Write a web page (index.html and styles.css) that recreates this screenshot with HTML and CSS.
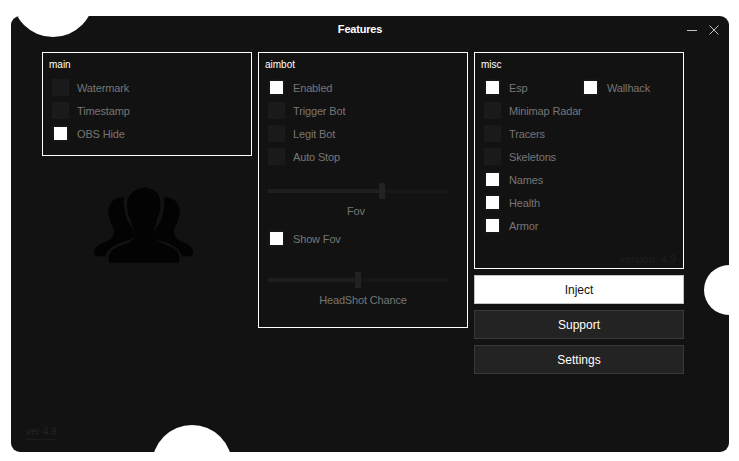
FILE: index.html
```html
<!DOCTYPE html>
<html lang="en">
  <head>
    <meta charset="utf-8">
    <title>Features</title>
    <link rel="stylesheet" href="styles.css">
  </head>
  <body>
    <div id="window">
      <div class="blob blob-top"></div>
      <div class="blob blob-right"></div>
      <div class="blob blob-bottom"></div>

      <header id="titlebar">
        <div class="title">Features</div>
        <svg class="controls" width="32" height="12" viewBox="0 0 32 12">
          <path d="M0 6.5H10" />
          <path d="M22.5 1.5L31.5 10.5M31.5 1.5L22.5 10.5" />
        </svg>
      </header>

      <main id="columns">
        <div class="col">
          <section class="panel panel-main">
            <div class="panel-title">main</div>
            <div class="row"><span class="box"></span><span class="lbl">Watermark</span></div>
            <div class="row"><span class="box"></span><span class="lbl">Timestamp</span></div>
            <div class="row"><span class="box on"></span><span class="lbl">OBS Hide</span></div>
          </section>
          <svg class="users" width="100" height="76" viewBox="42 35 298 228">
            <path d="M130 66C100 66 84 85 84 108C84 130 94 146 100 160C104 180 95 193 75 200C55 208 42 215 42 232C42 240 44 243 50 243H75C80 222 100 208 130 200C155 193 165 185 162 172C158 155 143 145 138 125C133 108 128 85 130 66Z" />
            <path d="M252 66C282 66 298 85 298 108C298 130 288 146 282 160C278 180 287 193 307 200C327 208 338 215 338 232C338 240 336 243 330 243H305C300 222 280 208 252 200C227 193 220 185 222 172C226 155 240 145 245 125C249 108 254 85 252 66Z" />
            <path d="M190 37C200 34 205 40 212 42C232 48 241 65 240 88C240 105 237 118 230 130C228 150 218 165 222 180C226 195 240 202 260 210C285 218 297 228 297 250C297 258 295 262 290 262H92C87 262 85 258 85 250C85 228 100 218 125 210C145 203 160 195 163 180C166 165 152 150 150 130C143 118 140 105 140 88C140 60 160 40 190 37Z" />
          </svg>
          <div class="ver">ver 4.9</div>
        </div>

        <div class="col">
          <section class="panel panel-aimbot">
            <div class="panel-title">aimbot</div>
            <div class="row"><span class="box on"></span><span class="lbl">Enabled</span></div>
            <div class="row"><span class="box"></span><span class="lbl">Trigger Bot</span></div>
            <div class="row"><span class="box"></span><span class="lbl">Legit Bot</span></div>
            <div class="row"><span class="box"></span><span class="lbl">Auto Stop</span></div>
            <div class="slider slider-fov">
              <span class="fill" style="width: 111px"></span><span class="thumb"></span><span class="rest"></span>
            </div>
            <div class="slider-lbl fov-lbl">Fov</div>
            <div class="row show-fov"><span class="box on"></span><span class="lbl">Show Fov</span></div>
            <div class="slider slider-hs">
              <span class="fill" style="width: 87px"></span><span class="thumb"></span><span class="rest"></span>
            </div>
            <div class="slider-lbl">HeadShot Chance</div>
          </section>
        </div>

        <div class="col">
          <section class="panel panel-misc">
            <div class="panel-title">misc</div>
            <div class="row">
              <span class="box on"></span><span class="lbl esp">Esp</span>
              <span class="box on"></span><span class="lbl">Wallhack</span>
            </div>
            <div class="row"><span class="box"></span><span class="lbl">Minimap Radar</span></div>
            <div class="row"><span class="box"></span><span class="lbl">Tracers</span></div>
            <div class="row"><span class="box"></span><span class="lbl">Skeletons</span></div>
            <div class="row"><span class="box on"></span><span class="lbl">Names</span></div>
            <div class="row"><span class="box on"></span><span class="lbl">Health</span></div>
            <div class="row"><span class="box on"></span><span class="lbl">Armor</span></div>
            <div class="version">version: 4.9</div>
          </section>
          <button class="btn btn-light">Inject</button>
          <button class="btn">Support</button>
          <button class="btn">Settings</button>
        </div>
      </main>
    </div>
  </body>
</html>
```

FILE: styles.css
```css
* {
  box-sizing: border-box;
}

body {
  margin: 0;
  background: #FFFFFF;
  font-family: "Liberation Sans", Arial, sans-serif;
  font-size: 11px;
}

#window {
  position: relative;
  display: flex;
  flex-direction: column;
  width: 718px;
  height: 436px;
  margin: 16px 0 0 11px;
  background: #121212;
  border-radius: 9px;
  overflow: hidden;
}

.blob {
  position: absolute;
  background: #FFFFFF;
  border-radius: 50%;
}

.blob-top {
  left: 1px;
  top: -61px;
  width: 82px;
  height: 82px;
}

.blob-right {
  right: -25px;
  top: 249px;
  width: 50px;
  height: 50px;
}

.blob-bottom {
  left: 141px;
  top: 409px;
  width: 80px;
  height: 80px;
}

#titlebar {
  display: flex;
  align-items: center;
  height: 36px;
  padding-right: 10px;
  flex: none;
}

#titlebar .title {
  flex: 1;
  padding: 0 0 10px 22px;
  color: #FFFFFF;
  font-size: 11px;
  font-weight: 700;
  letter-spacing: -0.2px;
  text-align: center;
}

.controls {
  margin-bottom: 10px;
  margin-top: 2px;
  position: relative;
  z-index: 1;
}

.controls path {
  fill: none;
  stroke: #C4C4C4;
  stroke-width: 1;
}

#columns {
  display: flex;
  flex: 1;
  gap: 6px;
  padding-left: 31px;
}

.col {
  display: flex;
  flex-direction: column;
  width: 210px;
}

.panel {
  padding: 5px 9px;
  border: 1px solid #FFFFFF;
}

.panel-main {
  height: 104px;
}

.panel-aimbot {
  height: 276px;
}

.panel-misc {
  height: 217px;
}

.panel-title {
  height: 14px;
  margin: 0 0 7px -3px;
  color: #FFFFFF;
  font-size: 10px;
  line-height: 14px;
}

.row {
  display: flex;
  align-items: center;
  height: 17px;
  margin-bottom: 6px;
}

.box {
  flex: none;
  width: 17px;
  height: 17px;
  margin-right: 8px;
  background: #1A1A1A;
}

.box.on {
  background: #FFFFFF;
  border: 2px solid #161616;
}

.lbl {
  color: #767676;
  letter-spacing: -0.15px;
  white-space: nowrap;
}

.lbl.esp {
  width: 73px;
}

.slider {
  display: flex;
  align-items: center;
  width: 180px;
  height: 16px;
}

.slider-fov {
  margin-top: 18px;
}

.slider-hs {
  margin-top: 25px;
}

.fill {
  height: 4px;
  background: #1E1E1E;
}

.thumb {
  width: 6px;
  height: 16px;
  background: #222222;
}

.rest {
  flex: 1;
  height: 4px;
  background: #171717;
}

.slider-lbl {
  height: 16px;
  margin-top: 4px;
  color: #767676;
  letter-spacing: -0.15px;
  line-height: 16px;
  text-align: center;
}

.fov-lbl {
  padding-right: 14px;
}

.show-fov {
  margin-top: 11px;
}

.version {
  margin: 18px -2px 0 0;
  color: #1F1F1F;
  line-height: 14px;
  text-align: right;
}

.btn {
  height: 29px;
  margin-top: 6px;
  background: #232323;
  border: 1px solid #3A3A3A;
  color: #FFFFFF;
  font-family: inherit;
  font-size: 12px;
}

.btn-light {
  background: #FFFFFF;
  border-color: #C4C4C4;
  color: #111111;
}

.users {
  margin: 31px 0 0 52px;
  flex: none;
}

.users path {
  fill: #030303;
}

.ver {
  align-self: flex-start;
  margin: auto 0 12px -16px;
  color: #242424;
  border-bottom: 1px solid #1C1C1C;
  line-height: 15px;
  font-size: 10px;
}
```
